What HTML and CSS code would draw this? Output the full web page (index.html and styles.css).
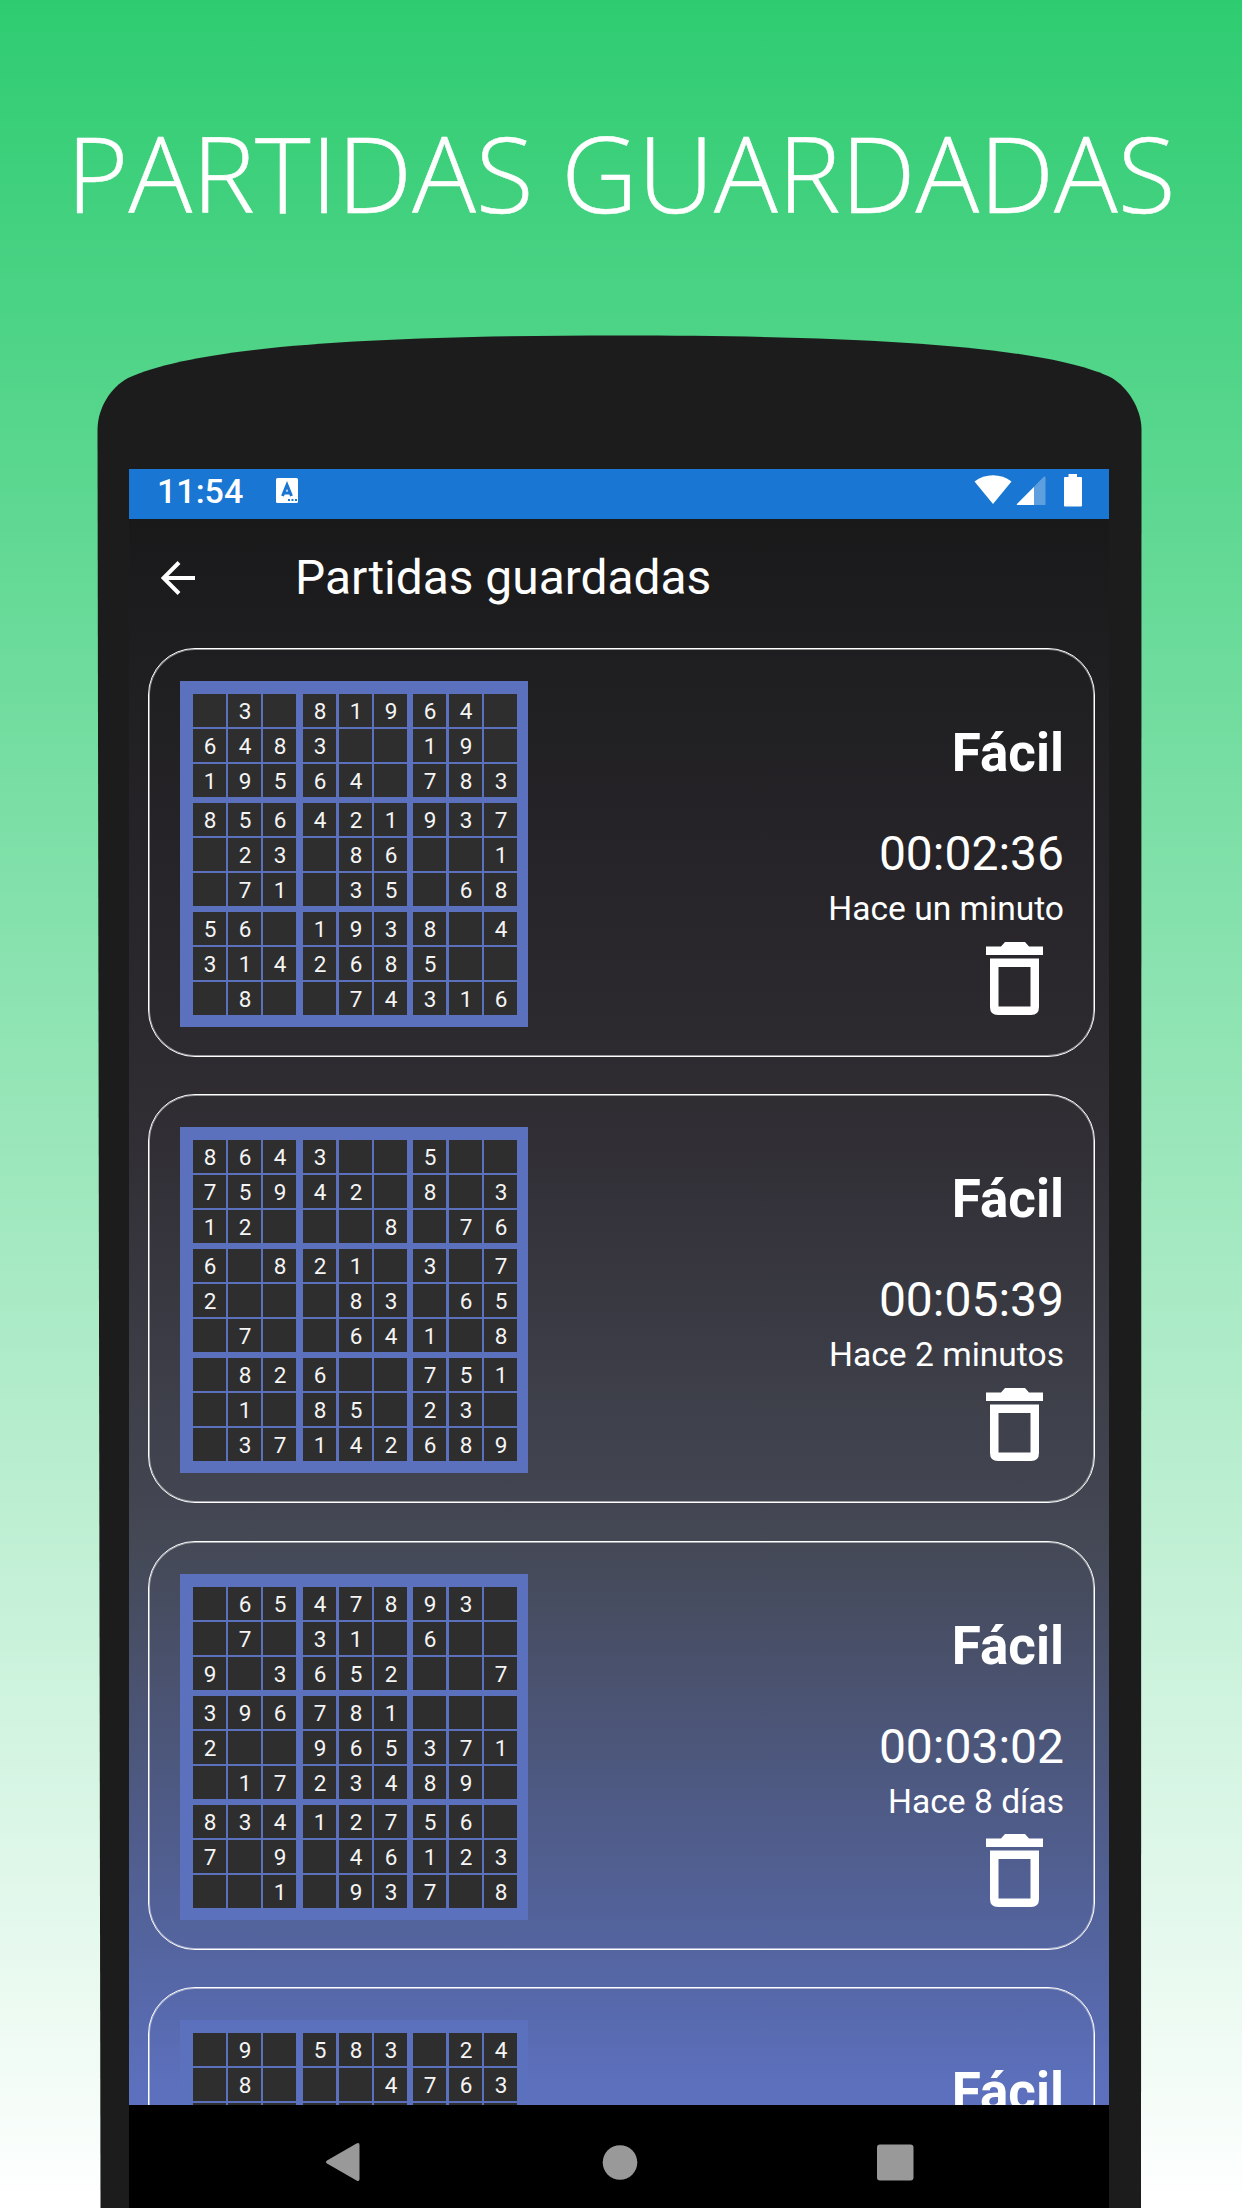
FILE: index.html
```html
<!DOCTYPE html>
<html lang="es">
<head>
<meta charset="utf-8">
<title>Partidas guardadas</title>
<link rel="stylesheet" href="styles.css">
</head>
<body>
<main class="promo">
  <h1 class="headline">PARTIDAS GUARDADAS</h1>
  <section class="phone">
    <svg class="shell" viewBox="0 0 1242 1874" aria-hidden="true">
      <path d="M97.500 95C98 74 110 54 128 44C200 11 385 1.500 620 1.500S1045 11 1112 44C1128 54 1141 74 1141.500 95L1141 1874H100.500Z"/>
    </svg>
    <div class="screen">
      <header class="status">
        <span class="clock">11:54</span>
        <svg class="lang" viewBox="0 0 22 25"><rect width="22" height="25" rx="1.500" fill="#fff"/><path d="M6.500 18 11 7l4.500 11M8 15h6" fill="none" stroke="#1976d2" stroke-width="3"/><path d="M12 21h2v2h-2zM15.500 21h2v2h-2zM19 21h2v2h-2z" fill="#1976d2"/></svg>
        <svg class="signals" viewBox="0 0 110 34"><path d="M.5 8.500C11 0 27 0 37.500 8.500L19 31Z"/><path d="M43 31 69 4.500q2.500-2 2.500 0V32H44q-2 0-1-1z" opacity=".3"/><path d="M43 31 60 14v18H44q-2 0-1-1z"/><path d="M94.500 1h8.500v3h4q1 0 1 1v27.500q0 1-1 1H91q-1 0-1-1V5q0-1 1-1h3.500z"/></svg>
      </header>
      <div class="app">
        <div class="toolbar">
          <svg class="back" viewBox="0 0 34 34"><path d="M18 1.500 2.500 17 18 32.500M2.500 17H34"/></svg>
          <h2>Partidas guardadas</h2>
        </div>
        <div class="list" id="list"></div>
      </div>
      <nav class="nav">
        <svg viewBox="0 0 36 40"><path d="M31.500 1.500 2 18.500q-2 1.500 0 3L31.500 38.500q3 1.500 3-1.500V3q0-3-3-1.500z"/></svg>
        <svg viewBox="0 0 36 40"><ellipse cx="19" cy="20.500" rx="17.300" ry="17.200"/></svg>
        <svg viewBox="0 0 36 40"><rect y="2.500" width="36.500" height="36" rx="3"/></svg>
      </nav>
    </div>
  </section>
</main>
<script src="app.js"></script>
</body>
</html>
```
FILE: styles.css
```css
* { box-sizing: border-box; }
body { margin: 0; font-family: Roboto, sans-serif; color: #fff; }
.promo {
  width: 1242px; height: 2208px; overflow: hidden;
  display: flex; flex-direction: column;
  background: linear-gradient(#2ecc71, #fff);
}
.headline {
  height: 334px; margin: 0; padding-top: 98px;
  font: 300 106px/148px "Open Sans", sans-serif;
  text-align: center; white-space: nowrap;
  -webkit-text-stroke: .5px #fff;
}
.phone { position: relative; flex: 1; padding: 135px 133px 0 129px; }
.shell { position: absolute; left: 0; top: 0; width: 1242px; height: 1874px; fill: #1c1c1c; }
.screen { position: relative; height: 1739px; display: flex; flex-direction: column; }
.status { height: 50px; background: #1976d2; display: flex; align-items: flex-start; padding: 0 25px 0 28px; }
.clock { font-size: 34px; line-height: 45px; font-weight: 500; width: 119px; white-space: nowrap; }
.lang { width: 22px; height: 25px; margin-top: 9px; }
.signals { width: 110px; height: 34px; margin: 4px 0 0 auto; fill: #fff; }
.app {
  height: 1586px; overflow: hidden;
  background: linear-gradient(#19191a, #2f2c32 37%, #444854 64%, #53639c 89%, #5c70bd 99%);
}
.toolbar { height: 129px; padding: 0 0 12px 32px; display: flex; align-items: center; }
.toolbar h2 { margin: 0; font-size: 47.900px; font-weight: 400; white-space: nowrap; }
.back { width: 34px; height: 34px; margin-right: 100px; fill: none; stroke: #fff; stroke-width: 4; }
.list { padding: 0 14px 0 19px; display: flex; flex-direction: column; gap: 37.400px; }
.card {
  height: 409px; border: 1px solid #fff; border-radius: 47px;
  box-shadow: inset 0 0 0 1px rgba(255, 255, 255, .5);
  padding: 32px 30px 0 31px; display: flex; justify-content: space-between; flex: none;
}
.board {
  width: 348px; height: 346px; padding: 13px 0 0 13px; background: #5c71bd;
  display: grid; grid-template: 35px 35px 39px 35px 35px 39px 35px 35px 33px / 35px 35px 40px 36px 35px 39px 36px 35px 34px;
}
.cell { width: 33px; height: 33px; background: #2e2e2e; font-size: 22.500px; line-height: 34px; padding-left: 1px; text-align: center; color: #f5f5f5; }
.info { display: flex; flex-direction: column; align-items: flex-end; white-space: nowrap; }
.level { font-size: 53px; font-weight: 700; line-height: 64px; margin-top: 40px; }
.time { font-size: 48px; line-height: 56px; margin-top: 41px; }
.ago { font-size: 33.600px; line-height: 40px; margin-top: 7px; }
.trash { width: 57px; height: 73px; margin: 12.500px 21px 0 0; fill: #fff; }
.nav { height: 103px; background: #000; display: flex; gap: 240px; padding: 37px 0 0 196px; }
.nav svg { width: 36px; height: 40px; fill: #999; overflow: visible; flex: none; }
```
FILE: app.js
```js
const games = [
  ["00:02:36", "Hace un minuto", "030819640 648300190 195640783 856421937 023086001 071035068 560193804 314268500 080074316"],
  ["00:05:39", "Hace 2 minutos", "864300500 759420803 120008076 608210307 200083065 070064108 082600751 010850230 037142689"],
  ["00:03:02", "Hace 8 días", "065478930 070310600 903652007 396781000 200965371 017234890 834127560 709046123 001093708"],
  ["", "", "090583024 080004763 000000000 000000000 000000000 000000000 000000000 000000000 000000000"]
];
document.getElementById("list").innerHTML = games.map(([time, ago, rows]) => `
  <article class="card">
    <div class="board">${[...rows.replace(/ /g, "")].map(d => `<span class="cell">${d === "0" ? "" : d}</span>`).join("")}</div>
    <div class="info">
      <div class="level">Fácil</div>
      <div class="time">${time}</div>
      <div class="ago">${ago}</div>
      <svg class="trash" viewBox="0 0 57 73"><path d="M0 4.500h15L19 0h20l4 4.500h14V13H0z"/><path fill-rule="evenodd" d="M4 16.500h49V65q0 8-8 8H12q-8 0-8-8zM12.500 25v39.500h32V25z"/></svg>
    </div>
  </article>`).join("");
```
